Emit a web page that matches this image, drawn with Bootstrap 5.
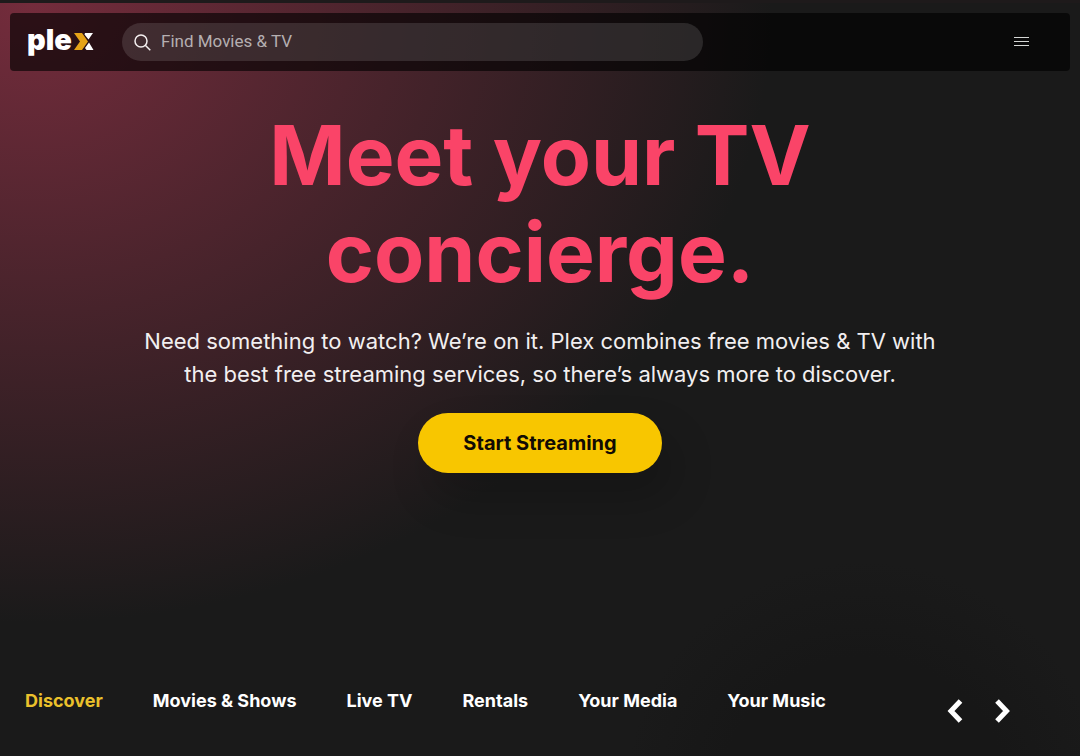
<!DOCTYPE html>
<html lang="en" data-bs-theme="dark">
<head>
<meta charset="utf-8">
<meta name="viewport" content="width=device-width, initial-scale=1">
<title>Plex</title>
<link href="https://cdn.jsdelivr.net/npm/bootstrap@5.3.0/dist/css/bootstrap.min.css" rel="stylesheet">
<style>
  body {
    font-family: Inter, "Liberation Sans", sans-serif;
    color: #f2eff0;
    background-color: #1a1a1a;
  }
  .page-shell {
    border-top: 3px solid #1e1a1b;
    background:
      radial-gradient(circle 240px at 80% 106%, #171717 60%, transparent 100%),
      radial-gradient(ellipse 740px 620px at 3% 0, #742c3c 0%, #1a1a1a 100%);
  }
  .top-nav {
    margin: 10px 10px 0;
    padding: 10px 32px 10px 18px;
    gap: 28px;
    border-radius: 4px;
    background: rgba(0, 0, 0, .62);
  }
  .search-pill {
    flex: 0 1 581px;
    height: 38px;
    padding: 0 12px;
    gap: 10px;
    border-radius: 19px;
    background: rgba(255, 255, 255, .12);
  }
  .search-pill input {
    font-family: Roboto, sans-serif;
    font-size: 17px;
    color: #fff;
    background: transparent;
    outline: 0;
  }
  .search-pill input::placeholder { color: #b5afb1; opacity: 1; }
  .hero { padding: 36px 24px 0; }
  .hero-title {
    max-width: 640px;
    font-size: 82px;
    line-height: 97px;
    font-weight: 700;
    color: #fa4468;
  }
  .hero-copy {
    max-width: 800px;
    margin-top: 24px;
    font-size: 22px;
    line-height: 33px;
  }
  .btn-stream {
    margin-top: 22px;
    padding: 15px 45px;
    font-size: 20px;
    line-height: 30px;
    font-weight: 700;
    color: #110b04;
    background: #f8c600;
    border: 0;
    box-shadow: 12px 24px 44px rgba(0, 0, 0, .2);
  }
  .btn-stream:hover { background: #ffd42a; color: #110b04; }
  .tab-bar { padding: 0 66px 33px 25px; }
  .tab-links { gap: 50px; }
  .tab-links a {
    font-size: 18px;
    line-height: 24px;
    font-weight: 700;
    color: #fff;
    white-space: nowrap;
  }
  .tab-links a.active { color: #ebc12c; }
  .arrows { gap: 23px; margin-top: 10px; }
</style>
</head>
<body>
<div class="page-shell min-vh-100 d-flex flex-column">
  <header class="top-nav d-flex align-items-center">
    <a href="#" class="d-flex flex-shrink-0" aria-label="Plex home">
      <svg width="66" height="38" viewBox="0 0 66 38" overflow="visible">
        <text x="-1" y="27" font-family="Inter, sans-serif" font-weight="900" font-size="29" fill="#fff">ple</text>
        <path fill="#e5a317" d="M46 10h8l6 8.500-6 8.500h-8l6-8.500z"/>
        <path fill="#fff" d="M57 10h8l-4.500 6.500-4-5zM61 19.500l4.500 7.500h-7l-1.500-2z"/>
      </svg>
    </a>
    <form class="search-pill d-flex align-items-center" role="search">
      <svg class="flex-shrink-0" width="17" height="17" viewBox="0 0 17 17" fill="none" stroke="#f4eff0" stroke-width="1.500">
        <circle cx="7" cy="7" r="6"/><path d="M11.300 11.300 16.300 16.300"/>
      </svg>
      <input class="border-0 p-0 w-100" type="text" placeholder="Find Movies &amp; TV" aria-label="Find Movies &amp; TV">
    </form>
    <button class="btn p-2 border-0 ms-auto d-flex" type="button" aria-label="Menu">
      <svg width="17" height="12" viewBox="0 0 17 12" stroke="#d5d7d5" stroke-width="1"><path d="M1 1.500h15M1 5.500h15M1 9.500h15"/></svg>
    </button>
  </header>

  <main class="hero d-flex flex-column align-items-center text-center">
    <h1 class="hero-title mb-0">Meet your TV concierge.</h1>
    <p class="hero-copy mb-0">Need something to watch? We’re on it. Plex combines free movies &amp; TV with the best free streaming services, so there’s always more to discover.</p>
    <button class="btn btn-stream rounded-pill" type="button">Start Streaming</button>
  </main>

  <footer class="tab-bar d-flex justify-content-between align-items-start mt-auto">
    <nav class="tab-links d-flex" aria-label="Sections">
      <a class="active text-decoration-none" href="#">Discover</a>
      <a class="text-decoration-none" href="#">Movies &amp; Shows</a>
      <a class="text-decoration-none" href="#">Live TV</a>
      <a class="text-decoration-none" href="#">Rentals</a>
      <a class="text-decoration-none" href="#">Your Media</a>
      <a class="text-decoration-none" href="#">Your Music</a>
    </nav>
    <div class="arrows d-flex">
      <button class="btn p-0 border-0 d-flex" type="button" aria-label="Previous">
        <svg width="24" height="24" viewBox="0 0 24 24" fill="none" stroke="#fff" stroke-width="5"><path d="M17.500 2 8 12l9.500 10"/></svg>
      </button>
      <button class="btn p-0 border-0 d-flex" type="button" aria-label="Next">
        <svg width="24" height="24" viewBox="0 0 24 24" fill="none" stroke="#fff" stroke-width="5"><path d="m7 2 9.500 10L7 22"/></svg>
      </button>
    </div>
  </footer>
</div>
<script src="https://cdn.jsdelivr.net/npm/bootstrap@5.3.0/dist/js/bootstrap.bundle.min.js"></script>
</body>
</html>
